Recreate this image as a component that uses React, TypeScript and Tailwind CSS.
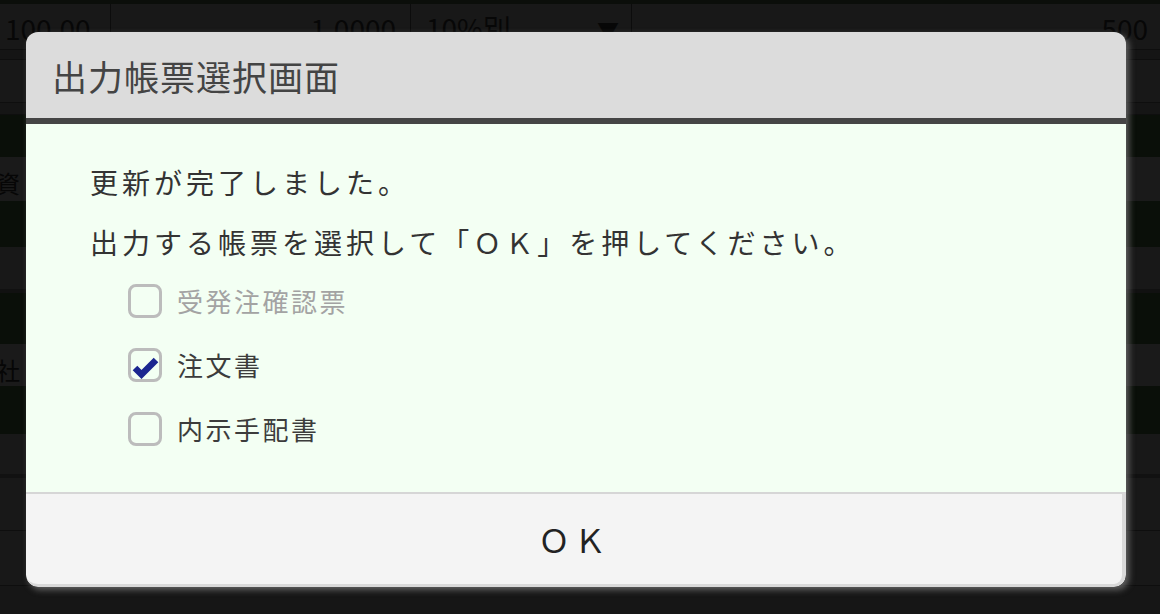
import { useState } from "react"

const font = { fontFamily: '"Noto Sans CJK JP", "Noto Sans", sans-serif' }

const rows: { h: string; bg: string; text?: string }[] = [
  { h: "h-[4px]", bg: "bg-[#0b0e0a]" },
  { h: "h-[45px]", bg: "bg-[#181818]", text: "top" },
  { h: "h-[11px]", bg: "bg-[#151515] border-y border-[#0e0e0e]" },
  { h: "h-[42px]", bg: "bg-[#181818]" },
  { h: "h-[13px]", bg: "bg-[#151515] border-y border-[#0e0e0e]" },
  { h: "h-[42px]", bg: "bg-[#0a0f09]" },
  { h: "h-[44px]", bg: "bg-[#1a1a1a]", text: "資" },
  { h: "h-[46px]", bg: "bg-[#0a0f09]" },
  { h: "h-[42px]", bg: "bg-[#181818]" },
  { h: "h-[4px]", bg: "bg-[#111111]" },
  { h: "h-[51px]", bg: "bg-[#0a0f09]" },
  { h: "h-[42px]", bg: "bg-[#1a1a1a]", text: "社" },
  { h: "h-[48px]", bg: "bg-[#0a0f09]" },
  { h: "h-[40px]", bg: "bg-[#181818]" },
  { h: "h-[4px]", bg: "bg-[#111111]" },
  { h: "h-[53px]", bg: "bg-[#181818] border-b border-[#0e0e0e]" },
  { h: "h-[55px]", bg: "bg-[#181818] border-b border-[#0e0e0e]" },
  { h: "h-[28px]", bg: "bg-[#161616]" },
]

function TopRow() {
  return (
    <div className="flex h-full text-[28px] text-[#070707] leading-none">
      <div className="w-[111px] border-r border-[#0c0c0c] pl-[5px] pt-[10px]">100.00</div>
      <div className="w-[300px] border-r border-[#0c0c0c] flex justify-end pr-[14px] pt-[10px]">1.0000</div>
      <div className="w-[221px] border-r border-[#0c0c0c] flex justify-between pl-[15px] pr-[12px] pt-[10px]">
        <span>10%別</span>
        <span className="text-[22px] pt-[4px]">▼</span>
      </div>
      <div className="flex-1 flex justify-end pr-[12px] pt-[10px]">500</div>
    </div>
  )
}

function Check({ checked }: { checked: boolean }) {
  return (
    <span className="relative w-[34px] h-[34px] rounded-[8px] border-[3px] border-[#bcbcbc] shrink-0">
      {checked && (
        <svg className="absolute -left-[3px] -top-[3px]" width="34" height="34" viewBox="0 0 34 34">
          <polyline points="7,20 13.5,26.5 28,12" fill="none" stroke="#1b2690" strokeWidth="6.5" />
        </svg>
      )}
    </span>
  )
}

export default function App() {
  const [checks, setChecks] = useState([false, true, false])
  const items = [
    { label: "受発注確認票", disabled: true },
    { label: "注文書", disabled: false },
    { label: "内示手配書", disabled: false },
  ]

  return (
    <div className="relative w-[1160px] h-[614px] overflow-hidden bg-[#161616]" style={font}>
      <div className="flex flex-col">
        {rows.map((r, i) => (
          <div key={i} className={`${r.h} ${r.bg} overflow-hidden`}>
            {r.text === "top" && <TopRow />}
            {r.text && r.text !== "top" && (
              <div className="text-[24px] text-[#060606] leading-none pt-[14px] -ml-[4px]">{r.text}</div>
            )}
          </div>
        ))}
      </div>

      <div className="absolute left-[26px] top-[32px] w-[1100px] rounded-[12px] overflow-hidden shadow-[3px_3px_6px_rgba(110,110,110,0.85)]">
        <div className="h-[92px] bg-[#dcdcdc] border-b-[6px] border-[#454545] flex items-center pl-[26px]">
          <span className="text-[35px] tracking-[1px] text-[#444444] leading-none">出力帳票選択画面</span>
        </div>

        <div className="h-[368px] bg-[#f3fff3] pl-[64px] pt-[42px]">
          <p className="text-[28px] tracking-[4px] text-[#333333] leading-[32px]">更新が完了しました。</p>
          <p className="text-[28px] tracking-[4px] text-[#333333] leading-[32px] mt-[28px]">
            出力する帳票を選択して「ＯＫ」を押してください。
          </p>
          <div className="flex flex-col gap-[30px] mt-[26px] pl-[38px]">
            {items.map((it, i) => (
              <label
                key={it.label}
                className="flex items-center gap-[15px] h-[34px]"
                onClick={() => !it.disabled && setChecks(checks.map((c, j) => (j === i ? !c : c)))}
              >
                <Check checked={checks[i]} />
                <span
                  className={`text-[26px] tracking-[2.5px] leading-none ${
                    it.disabled ? "text-[#a3a3a3]" : "text-[#3c3c3c]"
                  }`}
                >
                  {it.label}
                </span>
              </label>
            ))}
          </div>
        </div>

        <button className="w-full h-[95px] bg-[#f4f4f4] border-t-2 border-[#d6d6d6] border-b-[3px] border-b-[#d9d9d9] border-r-[4px] border-r-[#d9d9d9] rounded-b-[12px] flex items-center justify-center text-[32px] text-[#222222] tracking-[4px]">
          ＯＫ
        </button>
      </div>
    </div>
  )
}
